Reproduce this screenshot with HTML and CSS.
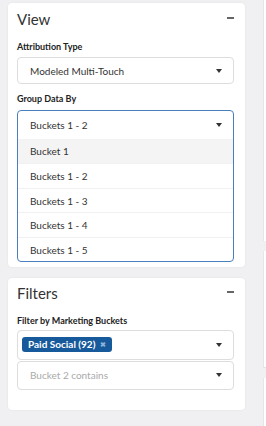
FILE: index.html
```html
<!DOCTYPE html>
<html lang="en">
<head>
    <meta charset="UTF-8">
    <meta name="viewport" content="width=device-width, initial-scale=1.0">
    <title>Report Settings</title>
    <link rel="stylesheet" href="styles.css">
</head>
<body>
    <div class="page">
        <div class="sidebar">
            <!-- View panel -->
            <div class="card view-card">
                <div class="card-head">
                    <h2>View</h2>
                    <span class="collapse"></span>
                </div>

                <label class="field-label">Attribution Type</label>
                <div class="select">
                    <span>Modeled Multi-Touch</span>
                    <span class="caret"></span>
                </div>

                <label class="field-label">Group Data By</label>
                <div class="dropdown">
                    <div class="dropdown-head">
                        <span>Buckets 1 - 2</span>
                        <span class="caret"></span>
                    </div>
                    <ul class="options">
                        <li class="active">Bucket 1</li>
                        <li>Buckets 1 - 2</li>
                        <li>Buckets 1 - 3</li>
                        <li>Buckets 1 - 4</li>
                        <li>Buckets 1 - 5</li>
                    </ul>
                </div>
            </div>

            <!-- Filters panel -->
            <div class="card filter-card">
                <div class="card-head">
                    <h2>Filters</h2>
                    <span class="collapse"></span>
                </div>

                <label class="field-label">Filter by Marketing Buckets</label>
                <div class="select tags">
                    <span class="tag">Paid Social (92) <span class="tag-x">&#10006;</span></span>
                    <span class="caret"></span>
                </div>
                <div class="select stacked">
                    <span class="placeholder">Bucket 2 contains</span>
                    <span class="caret"></span>
                </div>
            </div>
        </div>

        <div class="main">
            <div class="panel panel-top"></div>
            <div class="panel panel-mid"></div>
            <div class="panel panel-low"></div>
        </div>
    </div>
</body>
</html>
```

FILE: styles.css
```css
body {
    font-family: Lato, "Open Sans", Arial, sans-serif;
    margin: 0;
    padding: 0;
    background-color: #f0f0f2;
    color: #333;
}

.page {
    display: flex;
    gap: 18px;
    padding-left: 8px;
}

.sidebar {
    width: 237px;
    padding-top: 3px;
    display: flex;
    flex-direction: column;
    gap: 11px;
}

.card {
    background-color: #fff;
    border-radius: 4px;
    box-shadow: 0 0 2px rgba(0, 0, 0, 0.08);
    padding: 5px 11px 5px 9px;
}

.filter-card {
    padding-top: 4px;
    padding-bottom: 20px;
}

.card-head {
    display: flex;
    justify-content: space-between;
    align-items: center;
    height: 22px;
}

.card-head h2 {
    margin: 0;
    font-size: 15px;
    font-weight: 400;
    color: #333;
}

/* minus sign on the right of each panel */
.collapse {
    width: 7px;
    height: 2px;
    background-color: #666;
    margin-top: -2px;
}

.field-label {
    display: block;
    font-size: 9px;
    font-weight: 700;
    color: #222;
    line-height: 12px;
    margin-top: 11px;
    margin-bottom: 4px;
}

.view-card .select + .field-label {
    margin-top: 9px;
}

.view-card .field-label + .dropdown {
    margin-top: 5px;
}

.filter-card .field-label {
    margin-top: 11px;
    margin-bottom: 3px;
}

.select {
    display: flex;
    justify-content: space-between;
    align-items: center;
    height: 25px;
    border: 1px solid #ddd;
    border-radius: 4px;
    padding: 0 11px 0 12px;
    font-size: 10px;
    color: #333;
}

.select.tags {
    height: 28px;
    padding-left: 4px;
}

.select.stacked {
    margin-top: 1px;
    height: 27px;
}

.placeholder {
    color: #aaa;
}

.caret {
    width: 0;
    height: 0;
    border-left: 3px solid transparent;
    border-right: 3px solid transparent;
    border-top: 4px solid #333;
}

.tag {
    background-color: #175a9c;
    color: #fff;
    font-weight: 700;
    font-size: 10px;
    border-radius: 3px;
    padding: 0 6px;
    height: 15px;
    line-height: 15px;
}

.tag-x {
    color: #8db1da;
    font-size: 7px;
    margin-left: 2px;
    vertical-align: 1px;
}

.dropdown {
    border: 1px solid #4a7fbf;
    border-radius: 4px;
    overflow: hidden;
}

.dropdown-head {
    display: flex;
    justify-content: space-between;
    align-items: center;
    height: 28px;
    padding: 0 11px 0 12px;
    font-size: 10px;
}

.options {
    list-style: none;
    margin: 0;
    padding: 0;
}

.options li {
    height: 24.4px;
    line-height: 24px;
    padding-left: 12px;
    font-size: 10px;
    border-top: 1px solid #f1f1f1;
    box-sizing: border-box;
}

.options li.active {
    background-color: #f4f4f4;
    border-top: none;
}

.main {
    flex: 1;
    display: flex;
    flex-direction: column;
    gap: 10px;
}

.panel {
    background-color: #fff;
    border-left: 1px solid #e6e6e9;
}

.panel-top {
    height: 241px;
}

.panel-mid {
    height: 116px;
    border-bottom: 1px solid #e2e2e5;
}

.panel-low {
    height: 60px;
}
```
